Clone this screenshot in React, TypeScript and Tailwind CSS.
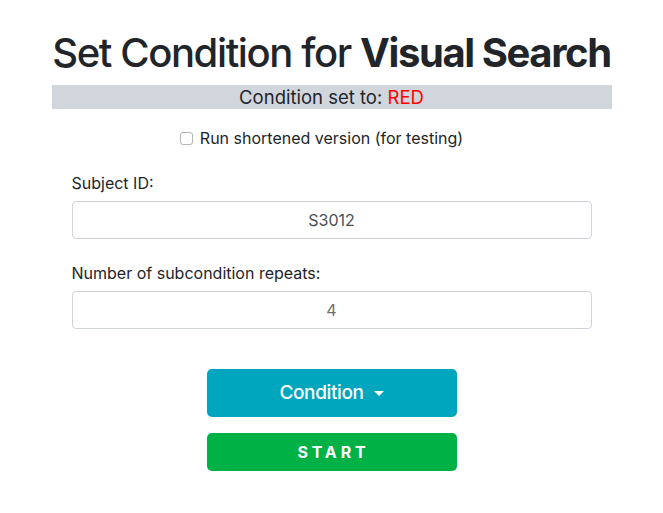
import React, { useState } from 'react';

const App: React.FC = () => {
  const [shortened, setShortened] = useState(false);
  const [subjectId, setSubjectId] = useState('S3012');
  const [repeats, setRepeats] = useState('4');

  return (
    <div className="min-h-screen bg-white font-['Inter','Liberation_Sans',Arial,sans-serif] text-[#212529]">
      <div className="mx-auto w-[560px] pt-[29px]">
        <h1 className="text-center text-[40px] leading-[48px] font-medium tracking-[-0.035em] whitespace-nowrap">
          Set Condition for <span className="font-bold">Visual Search</span>
        </h1>

        <div className="mt-[8px] h-[24px] bg-gray-300 text-center text-[18.5px] leading-[24px]">
          Condition set to: <span className="text-[#ff0000]">RED</span>
        </div>

        <label className="mt-[17px] flex items-center justify-center pr-[20px] text-[16px] leading-[24px]">
          <input
            type="checkbox"
            checked={shortened}
            onChange={e => setShortened(e.target.checked)}
            className="mr-[7px] h-[13px] w-[13px] appearance-none rounded-[3px] border border-[#b5b5b5] bg-white"
          />
          Run shortened version (for testing)
        </label>

        {/* Form fields */}
        <div className="px-[20px]">
          <div className="mt-[21px]">
            <div className="mb-[6px] text-[16px] leading-[24px]">Subject ID:</div>
            <input
              value={subjectId}
              onChange={e => setSubjectId(e.target.value)}
              className="block h-[38px] w-full rounded-[4px] border border-[#ced4da] bg-white text-center text-[16px] text-[#495057] outline-none"
            />
          </div>

          <div className="mt-[22px]">
            <div className="mb-[6px] text-[16px] leading-[24px]">Number of subcondition repeats:</div>
            <input
              value={repeats}
              onChange={e => setRepeats(e.target.value)}
              className="block h-[38px] w-full rounded-[4px] border border-[#ced4da] bg-white text-center text-[16px] text-[#6c6f73] outline-none"
            />
          </div>
        </div>

        <div className="mt-[40px] flex flex-col items-center gap-[16px]">
          <button className="flex h-[48px] w-[250px] items-center justify-center gap-[10px] rounded-[5px] bg-[#00a6bd] text-[19px] font-medium tracking-[-0.02em] text-white">
            Condition
            <span className="mt-[1px] h-0 w-0 border-x-[5px] border-t-[5px] border-x-transparent border-t-white" />
          </button>
          <button className="h-[38px] w-[250px] rounded-[5px] bg-[#00b246] pl-[4px] text-[16px] font-bold tracking-[0.24em] text-white">
            START
          </button>
        </div>
      </div>
    </div>
  );
};

export default App;
